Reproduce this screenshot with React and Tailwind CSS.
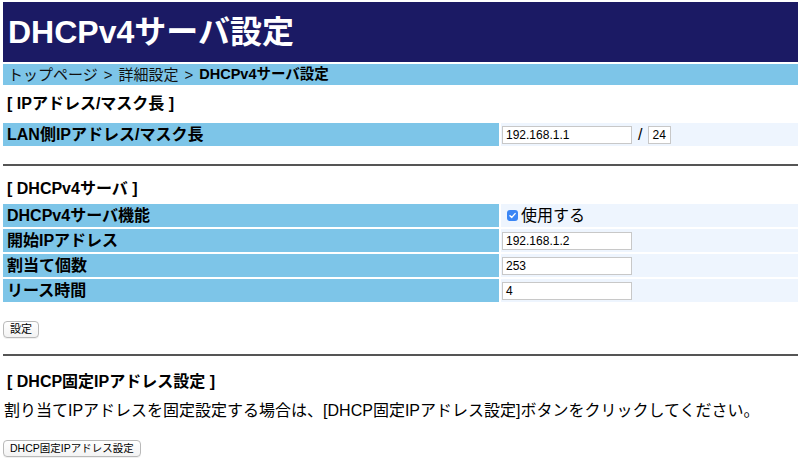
import React from "react";

const FONT = { fontFamily: '"Liberation Sans", "Noto Sans CJK JP", sans-serif' };

function Row({ label, children }) {
  return (
    <div className="grid grid-cols-[496px_1fr] gap-x-[2px] h-[23px]">
      <div className="bg-[#7dc5e8] flex items-center pl-[4px] text-[16px] font-bold leading-[20px] text-black">
        {label}
      </div>
      <div className="bg-[#eef5fe] flex items-center pl-[1px]">{children}</div>
    </div>
  );
}

function TextBox({ value, w = "w-[130px]" }) {
  return (
    <div
      className={`${w} h-[18px] bg-white border border-[#c8c8c8] flex items-center pl-[3px] text-[12px] leading-none text-black`}
    >
      {value}
    </div>
  );
}

function Btn({ children, small }) {
  return (
    <div
      className={`flex items-center h-[17px] px-[6px] border border-[#b9b9b9] rounded-[4px] bg-gradient-to-b from-white to-[#f3f3f3] ${
        small ? "text-[10.5px]" : "text-[11px]"
      } leading-none text-black shadow-[0_1px_0_rgba(0,0,0,0.06)]`}
    >
      {children}
    </div>
  );
}

function Heading({ children }) {
  return (
    <div className="h-[20px] pl-[4px] text-[16px] font-bold leading-[20px] text-black">{children}</div>
  );
}

export default function App() {
  return (
    <div style={FONT} className="w-[798px] h-[462px] bg-white pl-[3px] pt-[2px] overflow-hidden text-black">
      <div className="h-[60px] bg-[#1b1a64] flex items-center pl-[5px]">
        <h1 className="text-[32px] font-bold text-white leading-none">DHCPv4サーバ設定</h1>
      </div>
      <div className="mt-[2px] h-[21px] bg-[#7dc5e8] flex items-center pl-[5px] text-[15px] leading-none text-[#111]">
        <span>トップページ</span>
        <span className="mx-[6px]">&gt;</span>
        <span>詳細設定</span>
        <span className="mx-[6px]">&gt;</span>
        <span className="font-bold text-black text-[14.5px]">DHCPv4サーバ設定</span>
      </div>

      <div className="mt-[9px]">
        <Heading>[ IPアドレス/マスク長 ]</Heading>
      </div>
      <div className="mt-[9px]">
        <Row label="LAN側IPアドレス/マスク長">
          <TextBox value="192.168.1.1" />
          <span className="mx-[6px] text-[16px] leading-none">/</span>
          <TextBox value="24" w="w-[23px]" />
        </Row>
      </div>

      <div className="mt-[18px] border-t-2 border-[#555555]" />

      <div className="mt-[13px]">
        <Heading>[ DHCPv4サーバ ]</Heading>
      </div>
      <div className="mt-[5px] flex flex-col gap-[2px]">
        <Row label="DHCPv4サーバ機能">
          <div className="flex items-center">
            <div className="ml-[5px] w-[11px] h-[11px] rounded-[3px] bg-[#3a86f5] flex items-center justify-center">
              <svg width="9" height="9" viewBox="0 0 10 10">
                <path d="M2.2 5.2 L4.2 7.1 L7.9 2.9" fill="none" stroke="white" strokeWidth="1.6" strokeLinecap="round" strokeLinejoin="round" />
              </svg>
            </div>
            <span className="ml-[3px] text-[16px] leading-[20px]">使用する</span>
          </div>
        </Row>
        <Row label="開始IPアドレス">
          <TextBox value="192.168.1.2" />
        </Row>
        <Row label="割当て個数">
          <TextBox value="253" />
        </Row>
        <Row label="リース時間">
          <TextBox value="4" />
        </Row>
      </div>

      <div className="mt-[19px] flex">
        <Btn>設定</Btn>
      </div>

      <div className="mt-[16px] border-t-2 border-[#555555]" />

      <div className="mt-[16px]">
        <Heading>[ DHCP固定IPアドレス設定 ]</Heading>
      </div>
      <div className="mt-[9px] pl-[1px] text-[16px] leading-[20px]">
        割り当てIPアドレスを固定設定する場合は、[DHCP固定IPアドレス設定]ボタンをクリックしてください。
      </div>
      <div className="mt-[19px] flex">
        <Btn small>DHCP固定IPアドレス設定</Btn>
      </div>
    </div>
  );
}
